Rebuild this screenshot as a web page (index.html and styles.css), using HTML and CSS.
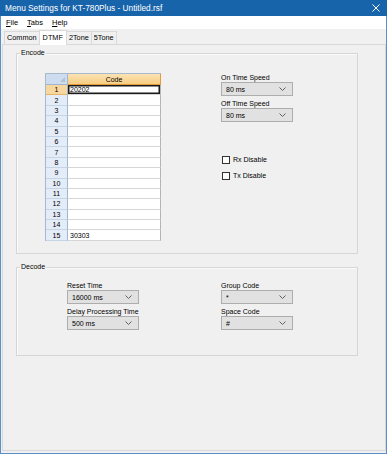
FILE: index.html
```html
<!DOCTYPE html>
<html lang="en">
<head>
    <meta charset="UTF-8">
    <meta name="viewport" content="width=device-width, initial-scale=1.0">
    <title>Menu Settings for KT-780Plus - Untitled.rsf</title>
    <link rel="stylesheet" href="styles.css">
</head>
<body>

    <div class="window">
        <div class="titlebar">
            <span class="title">Menu Settings for KT-780Plus - Untitled.rsf</span>
            <svg class="close" width="8" height="8" viewBox="0 0 8 8">
                <path d="M0.5 0.5 L7.5 7.5 M7.5 0.5 L0.5 7.5" stroke="#fff" stroke-width="1" fill="none"/>
            </svg>
        </div>

        <div class="menubar">
            <span class="menu"><u>F</u>ile</span>
            <span class="menu"><u>T</u>abs</span>
            <span class="menu"><u>H</u>elp</span>
        </div>

        <div class="tabctl">
            <div class="tabs">
                <div class="tab">Common</div>
                <div class="tab active">DTMF</div>
                <div class="tab">2Tone</div>
                <div class="tab">5Tone</div>
            </div>

            <div class="page">
                <!-- Encode -->
                <fieldset class="group encode">
                    <legend>Encode</legend>
                    <div class="encode-body">
                        <table class="grid">
                            <thead>
                                <tr>
                                    <th class="corner"><span class="tri"></span></th>
                                    <th class="colhead">Code</th>
                                </tr>
                            </thead>
                            <tbody>
                                <tr class="current"><td class="rowhead">1</td><td class="cell selected">20202</td></tr>
                                <tr><td class="rowhead">2</td><td class="cell"></td></tr>
                                <tr><td class="rowhead">3</td><td class="cell"></td></tr>
                                <tr><td class="rowhead">4</td><td class="cell"></td></tr>
                                <tr><td class="rowhead">5</td><td class="cell"></td></tr>
                                <tr><td class="rowhead">6</td><td class="cell"></td></tr>
                                <tr><td class="rowhead">7</td><td class="cell"></td></tr>
                                <tr><td class="rowhead">8</td><td class="cell"></td></tr>
                                <tr><td class="rowhead">9</td><td class="cell"></td></tr>
                                <tr><td class="rowhead">10</td><td class="cell"></td></tr>
                                <tr><td class="rowhead">11</td><td class="cell"></td></tr>
                                <tr><td class="rowhead">12</td><td class="cell"></td></tr>
                                <tr><td class="rowhead">13</td><td class="cell"></td></tr>
                                <tr><td class="rowhead">14</td><td class="cell"></td></tr>
                                <tr><td class="rowhead">15</td><td class="cell">30303</td></tr>
                            </tbody>
                        </table>

                        <div class="side">
                            <div class="field">
                                <div class="fld-label">On Time Speed</div>
                                <div class="combo"><span>80 ms</span><svg class="chev" width="7" height="4" viewBox="0 0 7 4"><path d="M0.5 0.5 L3.5 3.5 L6.5 0.5" stroke="#606060" fill="none"/></svg></div>
                            </div>
                            <div class="field">
                                <div class="fld-label">Off Time Speed</div>
                                <div class="combo"><span>80 ms</span><svg class="chev" width="7" height="4" viewBox="0 0 7 4"><path d="M0.5 0.5 L3.5 3.5 L6.5 0.5" stroke="#606060" fill="none"/></svg></div>
                            </div>
                            <div class="checks">
                                <div class="check"><span class="box"></span>Rx Disable</div>
                                <div class="check"><span class="box"></span>Tx Disable</div>
                            </div>
                        </div>
                    </div>
                </fieldset>

                <!-- Decode -->
                <fieldset class="group decode">
                    <legend>Decode</legend>
                    <div class="decode-body">
                        <div class="col">
                            <div class="field">
                                <div class="fld-label">Reset Time</div>
                                <div class="combo"><span>16000 ms</span><svg class="chev" width="7" height="4" viewBox="0 0 7 4"><path d="M0.5 0.5 L3.5 3.5 L6.5 0.5" stroke="#606060" fill="none"/></svg></div>
                            </div>
                            <div class="field">
                                <div class="fld-label">Delay Processing Time</div>
                                <div class="combo"><span>500 ms</span><svg class="chev" width="7" height="4" viewBox="0 0 7 4"><path d="M0.5 0.5 L3.5 3.5 L6.5 0.5" stroke="#606060" fill="none"/></svg></div>
                            </div>
                        </div>
                        <div class="col">
                            <div class="field">
                                <div class="fld-label">Group Code</div>
                                <div class="combo"><span>*</span><svg class="chev" width="7" height="4" viewBox="0 0 7 4"><path d="M0.5 0.5 L3.5 3.5 L6.5 0.5" stroke="#606060" fill="none"/></svg></div>
                            </div>
                            <div class="field">
                                <div class="fld-label">Space Code</div>
                                <div class="combo"><span>#</span><svg class="chev" width="7" height="4" viewBox="0 0 7 4"><path d="M0.5 0.5 L3.5 3.5 L6.5 0.5" stroke="#606060" fill="none"/></svg></div>
                            </div>
                        </div>
                    </div>
                </fieldset>
            </div>
        </div>
    </div>

</body>
</html>
```

FILE: styles.css
```css
* {
    margin: 0;
    padding: 0;
    box-sizing: border-box;
}
body {
    width: 387px;
    height: 454px;
    font-family: "Liberation Sans", Arial, sans-serif;
    font-size: 7px;
    color: #000;
    background-color: #f0f0f0;
    overflow: hidden;
}
.window {
    height: 454px;
    display: flex;
    flex-direction: column;
    border: 1px solid #5b8fc7;
    border-top: none;
    background-color: #f0f0f0;
}

/* title bar */
.titlebar {
    height: 16px;
    margin: 0 -1px;
    padding: 0 7px 0 5px;
    display: flex;
    align-items: center;
    justify-content: space-between;
    background-color: #1864ab;
    color: #fff;
}
.title {
    font-size: 8.3px;
}

/* menu bar */
.menubar {
    height: 13px;
    display: flex;
    align-items: center;
    gap: 9px;
    padding-left: 5px;
    background-color: #fff;
}
.menu {
    font-size: 7.5px;
}

/* tab control */
.tabctl {
    flex: 1;
    display: flex;
    flex-direction: column;
    margin: 0 0 2px 1px;
}
.tabs {
    height: 15px;
    display: flex;
    align-items: flex-end;
    padding-left: 2px;
}
.tab {
    height: 13px;
    line-height: 12px;
    padding: 0 2px;
    border: 1px solid #d9d9d9;
    border-bottom: none;
    border-right: none;
    background-color: #f0f0f0;
    font-size: 7.3px;
}
.tab:last-child {
    border-right: 1px solid #d9d9d9;
}
.tab.active {
    height: 15px;
    line-height: 13px;
    margin-bottom: -1px;
    padding: 0 3px;
    border-right: 1px solid #d9d9d9;
    background-color: #fff;
    position: relative;
}
.tab.active + .tab {
    border-left: none;
}
.page {
    flex: 1;
    border: 1px solid #d9d9d9;
    background-color: #f0f0f0;
    padding: 3px 0 0 13px;
}

/* group boxes */
.group {
    width: 342px;
    border: 1px solid #d6d6d6;
    box-shadow: 1px 1px 0 #fafafa inset;
}
.group legend {
    margin-left: 3px;
    padding: 0 1px;
    line-height: 10px;
}
.encode {
    height: 206px;
}
.decode {
    height: 94px;
    margin-top: 8px;
}
.encode-body {
    display: flex;
    padding: 15px 0 0 28px;
}

/* grid */
.grid {
    border-collapse: separate;
    border-spacing: 0;
    width: 116px;
    background-color: #fff;
    border-left: 1px solid #a9b9cc;
    border-top: 1px solid #a9b9cc;
    table-layout: fixed;
}
.grid th,
.grid td {
    font-weight: normal;
    padding: 0;
    white-space: nowrap;
}
.grid thead tr {
    height: 11px;
}
.grid tbody tr {
    height: 10.4px;
}
.corner {
    width: 22px;
    background-color: #cddcef;
    border-right: 1px solid #9fb5d2;
    border-bottom: 1px solid #9fb5d2;
    position: relative;
}
.tri {
    position: absolute;
    right: 2px;
    bottom: 2px;
    width: 0;
    height: 0;
    border-left: 5px solid transparent;
    border-bottom: 5px solid #b4c0ce;
}
.colhead {
    text-align: center;
    background: linear-gradient(#fbe3b4, #f7cd82);
    border-right: 1px solid #e69b3c;
    border-bottom: 1px solid #e69b3c;
}
.rowhead {
    text-align: center;
    background-color: #e4ecf7;
    border-right: 1px solid #9fb5d2;
    border-bottom: 1px solid #c5d5e8;
    line-height: 9px;
}
.current .rowhead {
    background-color: #f8d79e;
    border-bottom-color: #e8b46a;
}
.cell {
    border-right: 1px solid #b4b4b4;
    border-bottom: 1px solid #d6d6d6;
    padding-left: 2px !important;
    line-height: 9px;
}
.cell.selected {
    box-shadow: inset 0 0 0 1.5px #1a1a1a;
}

/* right side fields */
.side {
    margin-left: 60px;
    display: flex;
    flex-direction: column;
}
.field + .field {
    margin-top: 3px;
}
.fld-label {
    height: 9px;
    line-height: 9px;
}
.combo {
    width: 72px;
    height: 14px;
    display: flex;
    align-items: center;
    justify-content: space-between;
    padding: 0 6px 0 4px;
    border: 1px solid #adadad;
    background-color: #e1e1e1;
}
.chev {
    display: block;
}
.checks {
    margin-top: 33px;
    display: flex;
    flex-direction: column;
    gap: 7px;
}
.check {
    display: flex;
    align-items: center;
    height: 9px;
    padding-left: 1px;
}
.box {
    width: 8px;
    height: 8px;
    margin-right: 3px;
    border: 1px solid #333;
    background-color: #fff;
}

/* decode columns */
.decode-body {
    display: flex;
    gap: 82px;
    padding: 9px 0 0 50px;
}
```
